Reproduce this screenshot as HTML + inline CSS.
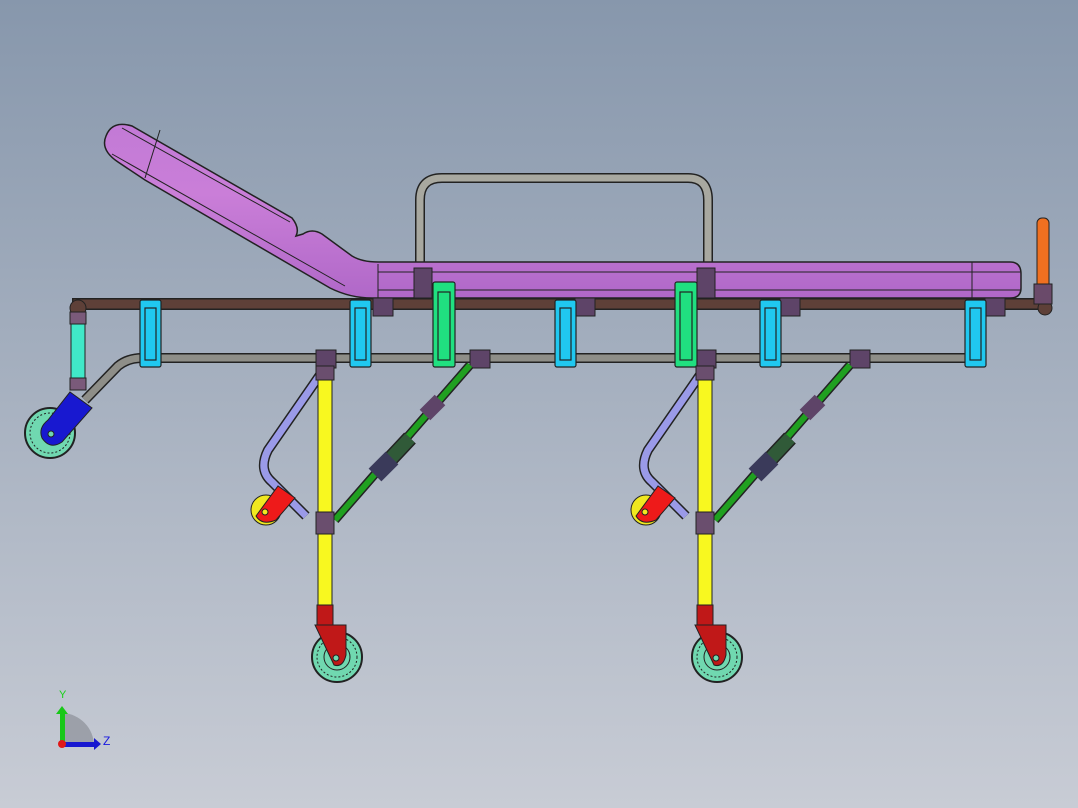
<!DOCTYPE html>
<html><head><style>
html,body{margin:0;padding:0;width:1078px;height:808px;overflow:hidden}
svg{display:block}
</style></head><body>
<svg width="1078" height="808" viewBox="0 0 1078 808" xmlns="http://www.w3.org/2000/svg">
<defs>
<linearGradient id="bg" x1="0" y1="0" x2="0" y2="1">
<stop offset="0" stop-color="#8797ac"/><stop offset="1" stop-color="#c8ccd5"/>
</linearGradient>
<linearGradient id="pur" x1="0" y1="0" x2="0" y2="1">
<stop offset="0" stop-color="#c27ad6"/><stop offset=".4" stop-color="#ca7ed8"/><stop offset="1" stop-color="#b068c8"/>
</linearGradient>
</defs>
<rect width="1078" height="808" fill="url(#bg)"/>

<!-- handle -->
<path d="M420 275 V200 Q420 178 442 178 H688 Q708 178 708 200 V275" fill="none" stroke="#222" stroke-width="10"/>
<path d="M420 275 V200 Q420 178 442 178 H688 Q708 178 708 200 V275" fill="none" stroke="#a8a8a0" stroke-width="7"/>

<!-- mattress -->
<path d="M106 136 Q112 120 132 126 L292 218 Q300 228 296 236 L303 234 Q312 228 322 234 L352 256 Q362 262 378 262 H1010 Q1021 262 1021 274 V288 Q1021 298 1010 298 H372 Q350 298 330 288 L145 180 L118 162 Q100 150 106 136 Z" fill="url(#pur)" stroke="#222" stroke-width="1.5"/>
<path d="M160 130 L145 178 M122 128 L290 222 M112 154 L345 286 M378 264 V298 M378 272 H1020 M378 290 H1020 M972 262 V298" fill="none" stroke="#222" stroke-width="1"/>

<!-- brown rail -->
<path d="M78 310 V304 H1043" stroke="#222" stroke-width="12" fill="none"/>
<path d="M78 310 V304 H1043" stroke="#5e4038" stroke-width="9" fill="none"/>
<circle cx="78" cy="308" r="8" fill="#5e4038" stroke="#222"/>
<circle cx="1045" cy="308" r="7" fill="#5e4038" stroke="#222"/>

<!-- orange post -->
<rect x="1037" y="218" width="12" height="72" rx="5" fill="#f07020" stroke="#222"/>
<rect x="1034" y="284" width="18" height="20" fill="#6a4a6a" stroke="#222"/>

<!-- gray lower rail -->
<path d="M985 358 H142 Q128 358 118 366 L85 400" stroke="#222" stroke-width="10" fill="none"/>
<path d="M985 358 H142 Q128 358 118 366 L85 400" stroke="#8e8e88" stroke-width="7" fill="none"/>

<!-- left post -->
<rect x="71" y="318" width="14" height="62" fill="#40e8c8" stroke="#222"/>
<rect x="70" y="312" width="16" height="12" fill="#7a5a7a" stroke="#222"/>
<rect x="70" y="378" width="16" height="12" fill="#7a5a7a" stroke="#222"/>

<!-- purple joints -->
<g fill="#5e4468" stroke="#222">
<rect x="373" y="298" width="20" height="18"/><rect x="575" y="298" width="20" height="18"/>
<rect x="780" y="298" width="20" height="18"/><rect x="985" y="298" width="20" height="18"/>
<rect x="316" y="350" width="20" height="18"/><rect x="470" y="350" width="20" height="18"/>
<rect x="850" y="350" width="20" height="18"/><rect x="696" y="350" width="20" height="18"/>
<rect x="414" y="268" width="18" height="30"/><rect x="697" y="268" width="18" height="30"/>
</g>

<!-- clips -->
<g stroke="#222" stroke-width="1.2">
<g fill="#20c8f0">
<rect x="140" y="300" width="21" height="67" rx="2"/><rect x="350" y="300" width="21" height="67" rx="2"/>
<rect x="555" y="300" width="21" height="67" rx="2"/><rect x="760" y="300" width="21" height="67" rx="2"/>
<rect x="965" y="300" width="21" height="67" rx="2"/>
</g>
<g fill="#20e080">
<rect x="433" y="282" width="22" height="85" rx="2"/><rect x="675" y="282" width="22" height="85" rx="2"/>
</g>
<g fill="none">
<rect x="145" y="308" width="11" height="52"/><rect x="355" y="308" width="11" height="52"/>
<rect x="560" y="308" width="11" height="52"/><rect x="765" y="308" width="11" height="52"/>
<rect x="970" y="308" width="11" height="52"/><rect x="438" y="292" width="12" height="68"/><rect x="680" y="292" width="12" height="68"/>
</g>
</g>

<!-- leg assemblies -->
<g id="leg">
<path d="M322 372 L268 450 Q258 470 272 482 L306 516" stroke="#222" stroke-width="10" fill="none"/>
<path d="M322 372 L268 450 Q258 470 272 482 L306 516" stroke="#9a9ae8" stroke-width="7" fill="none"/>
<path d="M335 520 L470 365" stroke="#222" stroke-width="9" fill="none"/>
<path d="M335 520 L470 365" stroke="#20a020" stroke-width="6" fill="none"/>
<path d="M380 470 L410 438" stroke="#222" stroke-width="16"/>
<path d="M380 470 L410 438" stroke="#305a38" stroke-width="13"/>
<path d="M375 475 L392 458" stroke="#3a3a5a" stroke-width="18"/>
<path d="M425 415 L440 400" stroke="#5e4468" stroke-width="15"/>
<rect x="318" y="366" width="14" height="244" fill="#f8f820" stroke="#222"/>
<rect x="316" y="512" width="18" height="22" fill="#6a4e6e" stroke="#222"/>
<rect x="316" y="366" width="18" height="14" fill="#6a4e6e" stroke="#222"/>
<circle cx="266" cy="510" r="15" fill="#f0e820" stroke="#222"/>
<path d="M256 516 L278 486 L295 498 L276 520 Q262 526 256 516Z" fill="#ee1a1a" stroke="#222"/>
<circle cx="265" cy="512" r="3" fill="#f0e820" stroke="#222"/>
<circle cx="337" cy="657" r="25" fill="#70d8b0" stroke="#222" stroke-width="2"/>
<circle cx="337" cy="657" r="20" fill="none" stroke="#222" stroke-width="1" stroke-dasharray="2 2"/>
<circle cx="337" cy="657" r="13" fill="none" stroke="#222"/>
<rect x="317" y="605" width="16" height="22" fill="#c01818" stroke="#222"/>
<path d="M315 625 H346 V655 Q343 668 334 665 Z" fill="#c01818" stroke="#222"/>
<circle cx="336" cy="658" r="3" fill="#70d8b0" stroke="#222"/>
</g>
<use href="#leg" transform="translate(380 0)"/>

<!-- left caster -->
<circle cx="50" cy="433" r="25" fill="#70d8b0" stroke="#222" stroke-width="2"/>
<circle cx="50" cy="433" r="20" fill="none" stroke="#222" stroke-dasharray="2 2"/>
<path d="M70 392 L92 408 L62 442 Q50 450 42 438 Q38 428 48 420Z" fill="#1818d0" stroke="#222"/>
<circle cx="51" cy="434" r="3" fill="#70d8b0" stroke="#222"/>

<!-- triad -->
<path d="M63 745 L63 713 A33 33 0 0 1 94 745 Z" fill="#8c9098" opacity=".7"/>
<rect x="60" y="712" width="5" height="33" fill="#18c818"/>
<path d="M56 714 L62 706 L68 714Z" fill="#18c818"/>
<rect x="62" y="742" width="34" height="5" fill="#1818d0"/>
<path d="M94 738 L101 744 L94 750Z" fill="#1818d0"/>
<circle cx="62" cy="744" r="4" fill="#e01818"/>
<text x="59" y="698" font-family="Liberation Sans, sans-serif" font-size="11" fill="#18d018">Y</text>
<text x="103" y="745" font-family="Liberation Sans, sans-serif" font-size="12" fill="#1818e0">Z</text>
</svg>
</body></html>
